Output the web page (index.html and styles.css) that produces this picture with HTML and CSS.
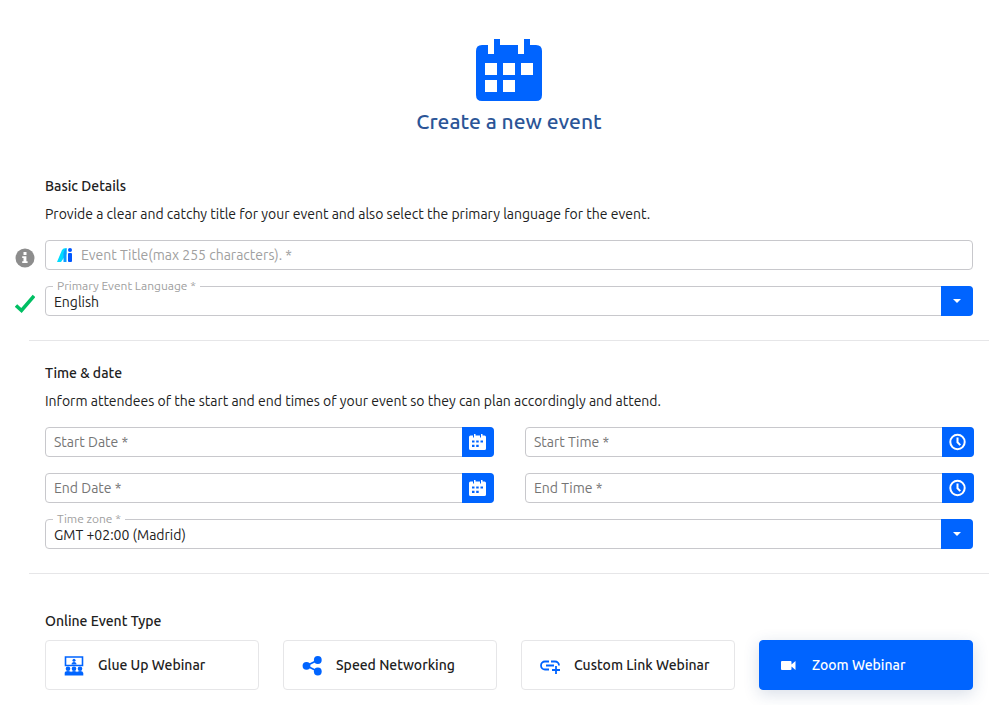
FILE: index.html
```html
<!DOCTYPE html>
<html lang="en">
<head>
<meta charset="utf-8">
<meta name="viewport" content="width=device-width, initial-scale=1">
<title>Create a new event</title>
<link rel="stylesheet" href="styles.css">
</head>
<body>
<svg class="sprite" aria-hidden="true">
  <symbol id="i-cal" viewBox="0 0 18 18">
    <path fill-rule="evenodd" d="M1.500 2.500H4V4.500H5V1H6.500V2.500H11V4.500H12V1H13.500V2.500H15.500Q17 2.500 17 4v11.500Q17 17 15.500 17h-14Q0 17 0 15.500V4Q0 2.500 1.500 2.500zM3 7.500v2h2.500v-2zM7.200 7.500v2h2.500v-2zM11.500 7.500v2H14v-2zM3 11.800v2.200h2.500v-2.200zM7.200 11.800v2.200h2.500v-2.200z"/>
  </symbol>
  <symbol id="i-clock" viewBox="0 0 18 18">
    <circle cx="8.500" cy="9" r="7.200" fill="none" stroke="currentColor" stroke-width="2"/>
    <path d="M8.500 4.500v4.800l2.800 2.800" fill="none" stroke="currentColor" stroke-width="2"/>
  </symbol>
</svg>
<main>
  <header class="hero">
    <svg class="hero-icon" viewBox="0 0 66 62" aria-hidden="true">
      <path fill="#0064ff" fill-rule="evenodd" d="M6 6h6v9h6V0h6v6h18v9h6V0h6v6h6q6 0 6 6v44q0 6-6 6H6q-6 0-6-6V12q0-6 6-6zM9 24v12h12V24zM27 24v12h12V24zM45 24v12h12V24zM9 41v12h12V41zM27 41v12h12V41z"/>
    </svg>
    <h1>Create a new event</h1>
  </header>

  <form>
    <section class="section first">
      <h2>Basic Details</h2>
      <p>Provide a clear and catchy title for your event and also select the primary language for the event.</p>
      <div class="stack">
        <div class="row">
          <svg class="status" viewBox="0 0 20 20" role="img" aria-label="Information">
            <circle cx="10" cy="10" r="9.500" fill="#8d8d8d"/>
            <path d="M8.500 4h3v3h-3zM7.200 8.200h4.200v5h1.200v1.800H7.200v-1.800h1.300V10H7.200z" fill="#fff"/>
          </svg>
          <div class="field title-field">
            <svg class="ai" viewBox="0 0 16 14" aria-hidden="true">
              <path d="M0 14L5 2Q6 0 9.500 0V6L4 14z" fill="#00dcff"/>
              <path d="M6.500 8L6.500 5Q7 2 9.500 0V14H6.500z" fill="#0a9dff"/>
              <circle cx="13" cy="2" r="2" fill="#0057ff"/>
              <rect x="11" y="5" width="4" height="9" rx="1" fill="#0057ff"/>
            </svg>
            <input type="text" maxlength="255" aria-label="Event title" placeholder="Event Title(max 255 characters). *">
          </div>
        </div>
        <div class="row">
          <svg class="status" viewBox="0 0 20 20" role="img" aria-label="Valid">
            <path d="M1 11.500l5.500 5L19 2" fill="none" stroke="#00bf63" stroke-width="3.500"/>
          </svg>
          <div class="field select-field">
            <label for="language">Primary Event Language *</label>
            <select id="language"><option>English</option></select>
            <span class="action caret"></span>
          </div>
        </div>
      </div>
    </section>

    <hr>

    <section class="section">
      <h2>Time &amp; date</h2>
      <p>Inform attendees of the start and end times of your event so they can plan accordingly and attend.</p>
      <div class="stack">
        <div class="dates">
          <div class="field"><input type="text" aria-label="Start date" placeholder="Start Date *"><button type="button" class="action" aria-label="Pick start date"><svg><use href="#i-cal"/></svg></button></div>
          <div class="field"><input type="text" aria-label="Start time" placeholder="Start Time *"><button type="button" class="action" aria-label="Pick start time"><svg><use href="#i-clock"/></svg></button></div>
          <div class="field"><input type="text" aria-label="End date" placeholder="End Date *"><button type="button" class="action" aria-label="Pick end date"><svg><use href="#i-cal"/></svg></button></div>
          <div class="field"><input type="text" aria-label="End time" placeholder="End Time *"><button type="button" class="action" aria-label="Pick end time"><svg><use href="#i-clock"/></svg></button></div>
        </div>
        <div class="field select-field">
          <label for="zone">Time zone *</label>
          <select id="zone"><option>GMT +02:00 (Madrid)</option></select>
          <span class="action caret"></span>
        </div>
      </div>
    </section>

    <hr>

    <section class="section types">
      <h2>Online Event Type</h2>
      <div class="cards">
        <button type="button" class="card">
          <svg viewBox="0 0 20 20" aria-hidden="true">
            <path d="M1.500 1h17v8.500h-17z" fill="none" stroke="currentColor" stroke-width="1.600"/>
            <circle cx="10" cy="4.200" r="1.500"/><path d="M7.500 8.500q0-2.500 2.500-2.500t2.500 2.500z"/>
            <circle cx="4" cy="12.800" r="2.300"/><circle cx="10" cy="12.800" r="2.300"/><circle cx="16" cy="12.800" r="2.300"/>
            <path d="M.7 19.500V17q0-2 3.300-2t3 1.500q0-1.500 3-1.500t3 1.500q0-1.500 3-1.500t3.300 2v2.500z"/>
          </svg>
          <span>Glue Up Webinar</span>
        </button>
        <button type="button" class="card">
          <svg viewBox="0 0 20 20" aria-hidden="true">
            <path d="M16 4L4.500 9.800L16 15.500" fill="none" stroke="currentColor" stroke-width="1.700"/>
            <circle cx="4.500" cy="9.800" r="3.900"/><circle cx="15.800" cy="4" r="3.900"/><circle cx="15.800" cy="15.500" r="3.900"/>
          </svg>
          <span>Speed Networking</span>
        </button>
        <button type="button" class="card">
          <svg viewBox="0 0 20 20" aria-hidden="true">
            <path d="M9 5.500H5a4 4 0 0 0 0 8h4M11 5.500h4a4 4 0 0 1 4 4M6 9.500h8M16 10v8M12 14h8" fill="none" stroke="currentColor" stroke-width="1.800"/>
          </svg>
          <span>Custom Link Webinar</span>
        </button>
        <button type="button" class="card selected" aria-pressed="true">
          <svg viewBox="0 0 20 20" aria-hidden="true">
            <path d="M4 5h8.500q1 0 1 1v2.500L17.500 5v9l-4-3.500V13q0 1-1 1H4q-1 0-1-1V6q0-1 1-1z"/>
          </svg>
          <span>Zoom Webinar</span>
        </button>
      </div>
    </section>
  </form>
</main>
</body>
</html>
```
FILE: styles.css
```css
* {
  box-sizing: border-box;
}

body {
  margin: 0;
  background: #fff;
  color: #212121;
  font: 14px/20px Ubuntu, "Noto Sans", sans-serif;
}

button,
input,
select {
  font: inherit;
  color: inherit;
}

.sprite {
  position: absolute;
  width: 0;
  height: 0;
}

.hero {
  display: flex;
  flex-direction: column;
  align-items: center;
  gap: 6px;
  padding: 39px 23px 0 45px;
}

.hero-icon {
  width: 66px;
  height: 62px;
}

h1 {
  margin: 0;
  color: #2b5597;
  font-size: 21px;
  font-weight: 500;
  line-height: 28px;
}

.section {
  padding: 22px 23px 24px 45px;
}

.section.first {
  padding-top: 41px;
}

.section.types {
  padding-top: 37px;
  padding-bottom: 15px;
}

h2 {
  margin: 0 0 8px;
  font-size: 14px;
  font-weight: 500;
  line-height: 20px;
}

.types h2 {
  margin-bottom: 9px;
}

p {
  margin: 0 0 16px;
}

hr {
  height: 1px;
  margin: 0 7px 0 29px;
  border: 0;
  background: #e6e6e8;
}

.stack {
  display: flex;
  flex-direction: column;
  gap: 16px;
}

.row {
  display: flex;
  align-items: center;
  margin-left: -30px;
}

.status {
  flex: none;
  width: 20px;
  height: 25px;
  margin-right: 10px;
  padding-top: 5px;
}

.field {
  position: relative;
  display: flex;
  flex: 1;
  min-width: 0;
  height: 30px;
  border: 1px solid #c8c8cc;
  border-radius: 4px;
}

.stack > .field {
  flex: none;
}

.field input,
.field select {
  flex: 1;
  min-width: 0;
  height: 28px;
  padding: 0 8px;
  border: 0;
  border-radius: 4px;
  outline: 0;
  background: transparent;
}

.field input::placeholder {
  color: #757575;
  opacity: 1;
}

.title-field {
  align-items: center;
  padding-left: 11px;
}

.title-field input::placeholder {
  color: #a0a0a0;
}

.ai {
  flex: none;
  width: 16px;
  height: 14px;
}

.select-field select {
  appearance: none;
  padding-top: 2px;
}

.select-field label {
  position: absolute;
  top: -9px;
  left: 7px;
  padding: 0 4px;
  background: #fff;
  color: #a0a0a0;
  font-size: 12px;
  line-height: 16px;
}

.action {
  display: flex;
  flex: none;
  align-items: center;
  justify-content: center;
  width: 32px;
  height: 30px;
  margin: -1px -1px -1px 0;
  padding: 0;
  border: 0;
  border-radius: 0 4px 4px 0;
  background: #0064ff;
  color: #fff;
}

.action svg {
  width: 18px;
  height: 18px;
  fill: currentColor;
}

.caret {
  pointer-events: none;
}

.caret::before {
  content: "";
  border: 4px solid transparent;
  border-top-color: #fff;
  border-bottom: 0;
}

.dates {
  display: grid;
  grid-template-columns: 1fr 1fr;
  gap: 16px 31px;
  margin-right: -1px;
}

.cards {
  display: grid;
  grid-template-columns: repeat(4, 1fr);
  gap: 24px;
}

.card {
  display: flex;
  align-items: center;
  gap: 14px;
  height: 50px;
  padding: 0 0 0 18px;
  border: 1px solid #e6e6e8;
  border-radius: 4px;
  background: #fff;
  font-weight: 500;
  white-space: nowrap;
}

.card svg {
  flex: none;
  width: 20px;
  height: 20px;
  margin-top: 2px;
  color: #0064ff;
  fill: currentColor;
}

.card.selected {
  border-color: #0064ff;
  background: #0064ff;
  box-shadow: 0 4px 16px rgba(40, 70, 130, 0.18);
  color: #fff;
}

.card.selected svg {
  color: #fff;
}
```
